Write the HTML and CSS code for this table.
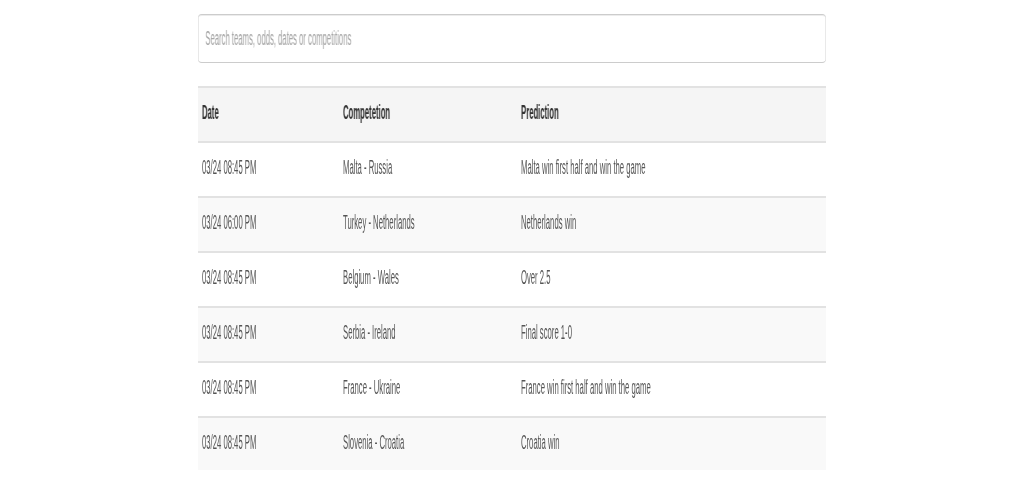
FILE: index.html
```html
<!DOCTYPE html>
<html lang="en">
<head>
<meta charset="utf-8">
<title>Predictions</title>
<link rel="stylesheet" href="styles.css">
</head>
<body>
<div class="container">
  <div class="search">
    <input class="search-input" type="text" placeholder="Search teams, odds, dates or competitions">
  </div>
  <table class="table">
    <colgroup>
      <col class="col-date">
      <col class="col-comp">
      <col class="col-pred">
    </colgroup>
    <thead>
      <tr><th><span class="t">Date</span></th><th><span class="t">Competetion</span></th><th><span class="t">Prediction</span></th></tr>
    </thead>
    <tbody>
      <tr><td><span class="t">03/24 08:45 PM</span></td><td><span class="t">Malta - Russia</span></td><td><span class="t">Malta win first half and win the game</span></td></tr>
      <tr><td><span class="t">03/24 06:00 PM</span></td><td><span class="t">Turkey - Netherlands</span></td><td><span class="t">Netherlands win</span></td></tr>
      <tr><td><span class="t">03/24 08:45 PM</span></td><td><span class="t">Belgium - Wales</span></td><td><span class="t">Over 2.5</span></td></tr>
      <tr><td><span class="t">03/24 08:45 PM</span></td><td><span class="t">Serbia - Ireland</span></td><td><span class="t">Final score 1-0</span></td></tr>
      <tr><td><span class="t">03/24 08:45 PM</span></td><td><span class="t">France - Ukraine</span></td><td><span class="t">France win first half and win the game</span></td></tr>
      <tr><td><span class="t">03/24 08:45 PM</span></td><td><span class="t">Slovenia - Croatia</span></td><td><span class="t">Croatia win</span></td></tr>
    </tbody>
  </table>
</div>
</body>
</html>
```

FILE: styles.css
```css
html, body {
  margin: 0;
  padding: 0;
  background: #fff;
  overflow: hidden;
}
body {
  font-family: "Liberation Sans", Arial, sans-serif;
  color: #333;
}
.container {
  width: 628px;
  margin: 14px 0 0 198px;
  filter: grayscale(1);
}
.search {
  height: 49px;
  margin-bottom: 23px;
  overflow: hidden;
}
.search-input {
  box-sizing: border-box;
  width: 1631px;
  height: 49px;
  padding: 0 18px;
  border: 1px solid #ccc;
  border-radius: 10px / 4px;
  box-shadow: inset 0 1px 1px rgba(0,0,0,0.075);
  font-family: "Liberation Sans", Arial, sans-serif;
  font-size: 20px;
  color: #555;
  background: #fff;
  transform: scaleX(0.385);
  transform-origin: left top;
  outline: none;
}
.search-input::placeholder {
  color: #a8a8a8;
}
.table {
  width: 628px;
  table-layout: fixed;
  border-collapse: collapse;
  border-spacing: 0;
}
.col-date { width: 141px; }
.col-comp { width: 178px; }
.col-pred { width: 309px; }
.table th,
.table td {
  border-top: 2px solid #e2e2e2;
  padding: 9px 4px 14px;
  line-height: 30px;
  font-size: 20px;
  text-align: left;
  white-space: nowrap;
  vertical-align: top;
}
.table tbody tr:last-child td {
  padding-bottom: 13px;
}
.table th {
  font-weight: bold;
  background: #f5f5f5;
  color: #333;
}
.table td {
  font-weight: normal;
  color: #555;
}
.table tbody tr:nth-child(even) td {
  background: #f9f9f9;
}
.t {
  display: inline-block;
  transform: scaleX(0.385);
  transform-origin: left center;
}
```
